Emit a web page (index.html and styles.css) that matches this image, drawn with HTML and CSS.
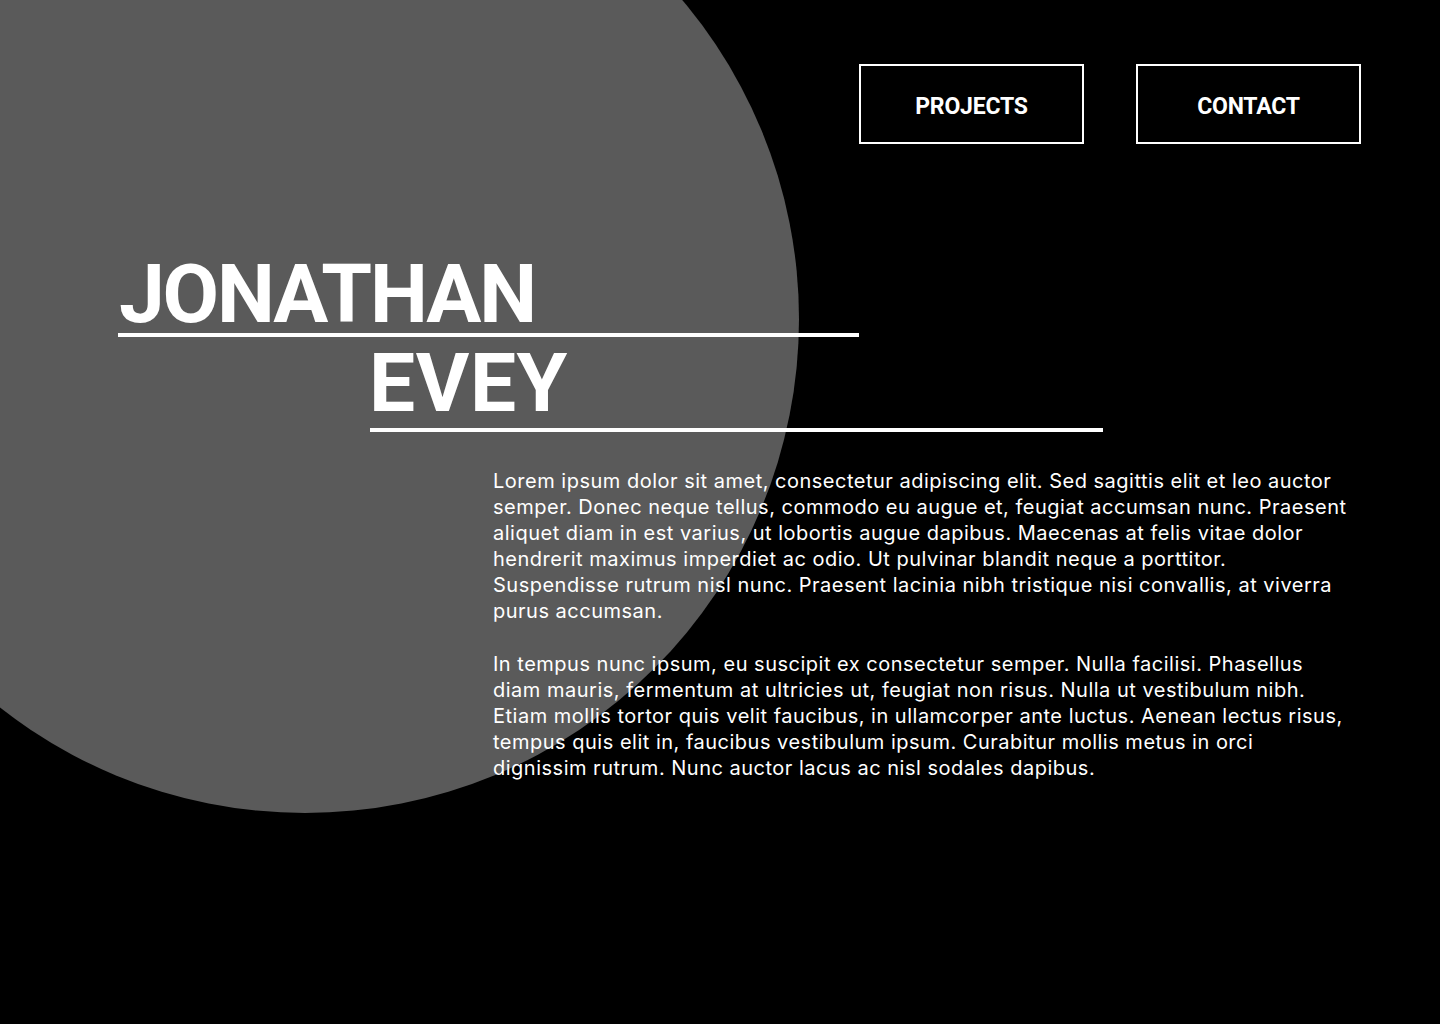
FILE: index.html
```html
<!DOCTYPE html>
<html lang="en">
<head>
<meta charset="utf-8">
<title>Jonathan Evey</title>
<link rel="stylesheet" href="styles.css">
</head>
<body>
<div class="page">
  <div class="circle" aria-hidden="true"></div>
  <header class="nav">
    <a class="nav-btn" href="#projects">PROJECTS</a>
    <a class="nav-btn" href="#contact">CONTACT</a>
  </header>
  <main class="hero">
    <h1 class="name">
      <span class="name-line first">JONATHAN</span>
      <span class="name-line second">EVEY</span>
    </h1>
    <div class="bio">
      <p>Lorem ipsum dolor sit amet, consectetur adipiscing elit. Sed sagittis elit et leo auctor semper. Donec neque tellus, commodo eu augue et, feugiat accumsan nunc. Praesent aliquet diam in est varius, ut lobortis augue dapibus. Maecenas at felis vitae dolor hendrerit maximus imperdiet ac odio. Ut pulvinar blandit neque a porttitor. Suspendisse rutrum nisl nunc. Praesent lacinia nibh tristique nisi convallis, at viverra purus accumsan.</p>
      <p>In tempus nunc ipsum, eu suscipit ex consectetur semper. Nulla facilisi. Phasellus diam mauris, fermentum at ultricies ut, feugiat non risus. Nulla ut vestibulum nibh. Etiam mollis tortor quis velit faucibus, in ullamcorper ante luctus. Aenean lectus risus, tempus quis elit in, faucibus vestibulum ipsum. Curabitur mollis metus in orci dignissim rutrum. Nunc auctor lacus ac nisl sodales dapibus.</p>
    </div>
  </main>
</div>
</body>
</html>
```

FILE: styles.css
```css
html, body {
  margin: 0;
  padding: 0;
  background: #000;
}

body {
  font-family: "Inter", "Open Sans", sans-serif;
  color: #fff;
}

.page {
  position: relative;
  width: 1440px;
  height: 1024px;
  overflow: hidden;
  background: #000;
}

.circle {
  position: absolute;
  left: -189px;
  top: -175px;
  width: 988px;
  height: 988px;
  border-radius: 50%;
  background: #5a5a5a;
}

.nav {
  position: relative;
  display: flex;
  justify-content: flex-end;
  gap: 52px;
  padding: 64px 79px 0 0;
}

.nav-btn {
  box-sizing: border-box;
  display: flex;
  align-items: center;
  justify-content: center;
  width: 225px;
  height: 80px;
  padding-top: 4px;
  border: 2px solid #fff;
  color: #fff;
  text-decoration: none;
  font-family: "Roboto", "Liberation Sans", sans-serif;
  font-weight: 700;
  font-size: 23px;
  letter-spacing: -0.2px;
}

.hero {
  position: relative;
  padding-top: 111px;
}

.name {
  margin: 0;
  font-family: "Roboto", "Liberation Sans", sans-serif;
  font-weight: 700;
  font-size: 82px;
  line-height: 78px;
  letter-spacing: -2.2px;
}

.name-line {
  display: block;
  box-sizing: border-box;
  border-bottom: 4px solid #fff;
}

.name-line.first {
  margin-left: 118px;
  width: 741px;
  padding-left: 1px;
}

.name-line.second {
  margin-left: 370px;
  margin-top: 7px;
  width: 733px;
  padding-bottom: 6px;
  text-indent: -1px;
  letter-spacing: 0.6px;
}

.bio {
  margin: 36px 0 0 493px;
  width: 858px;
  font-size: 20px;
  line-height: 26px;
  letter-spacing: 0.5px;
}

.bio p {
  margin: 0 0 27px;
}
```
